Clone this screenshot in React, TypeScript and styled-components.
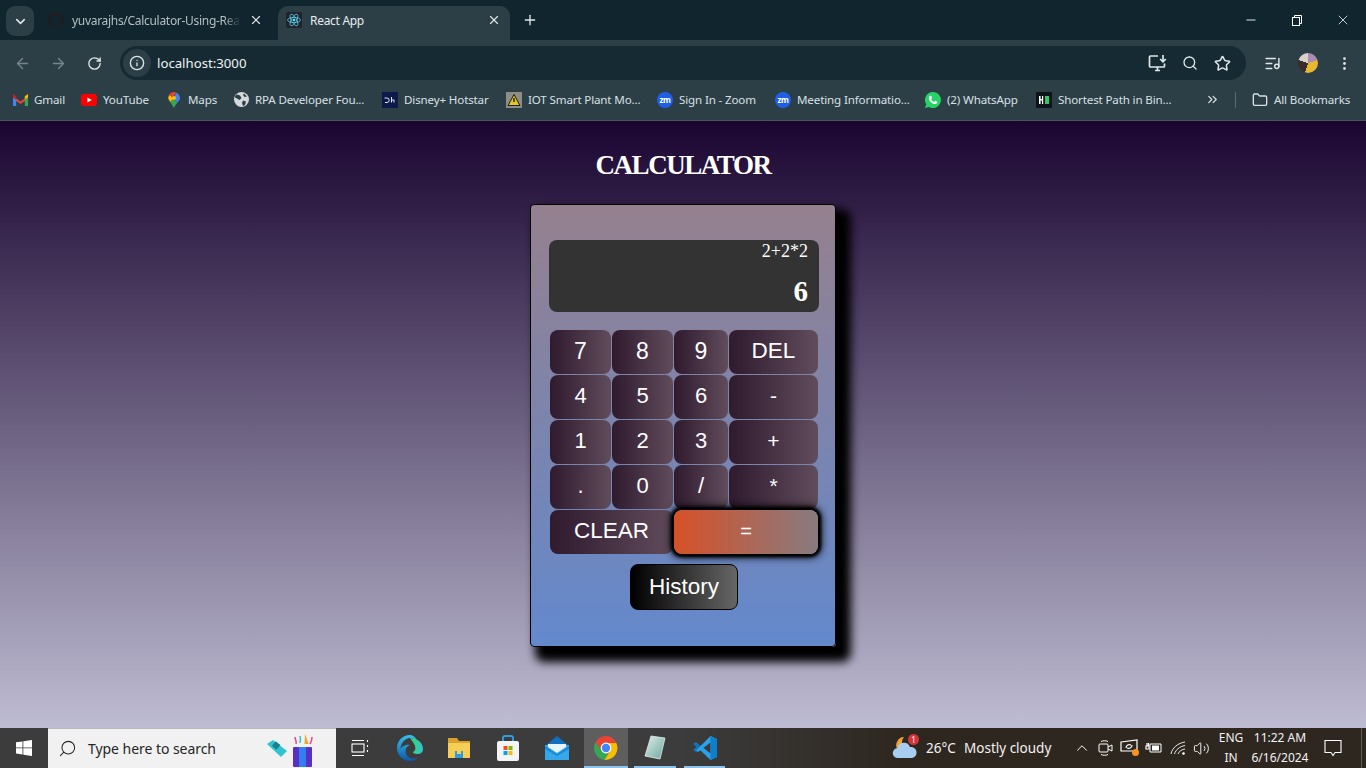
import React, {FC, ReactNode} from 'react'
import styled, {createGlobalStyle} from 'styled-components'
import {
    ArrowLeft, ArrowRight, ChevronDown, ChevronUp, ChevronsRight, EllipsisVertical, Folder, Info,
    ListMusic, Minus, Plus, RotateCw, Search, Star, Volume2, X,
} from 'lucide-react'

const GlobalStyle = createGlobalStyle`
  html, body {
    margin: 0;
    padding: 0;
    height: 100%;
    overflow: hidden;
  }
  * {
    box-sizing: border-box;
  }
`

const Root = styled.div`
  width: 1366px;
  height: 768px;
  display: flex;
  flex-direction: column;
  font-family: "Noto Sans", "Liberation Sans", sans-serif;
`

/* browser chrome */
const TabStrip = styled.div`
  height: 40px;
  flex: none;
  background: #10252d;
  display: flex;
  align-items: flex-end;
  padding-left: 6px;
  color: #dfe6e8;
`
const TabSearch = styled.div`
  width: 28px;
  height: 30px;
  margin-bottom: 4px;
  background: #2c3f47;
  border-radius: 9px;
  display: flex;
  align-items: center;
  justify-content: center;
`
const Tab = styled.div<{$active?: boolean; $w: number; $ml: number}>`
  width: ${({$w}) => $w}px;
  margin-left: ${({$ml}) => $ml}px;
  height: 34px;
  padding: 0 9px 6px 8px;
  display: flex;
  align-items: center;
  gap: 8px;
  border-radius: 10px 10px 0 0;
  background: ${({$active}) => ($active ? '#2c3f47' : 'transparent')};
  font-size: 12px;
`
const TabTitle = styled.span<{$muted?: boolean}>`
  flex: 1;
  white-space: nowrap;
  letter-spacing: -0.3px;
  color: ${({$muted}) => ($muted ? '#b4bfc3' : '#e8edef')};
  ${({$muted}) => $muted && `
    mask-image: linear-gradient(90deg, #000 90%, transparent 100%);
  `}
`
const NewTab = styled.div`
  width: 20px;
  height: 34px;
  margin-left: 10px;
  padding-bottom: 6px;
  display: flex;
  align-items: center;
  justify-content: center;
`
const WindowButtons = styled.div`
  margin-left: auto;
  height: 40px;
  display: flex;
`
const WindowButton = styled.div`
  width: 46px;
  display: flex;
  align-items: center;
  justify-content: center;
`

const Toolbar = styled.div`
  height: 40px;
  flex: none;
  background: #2c3f47;
  display: flex;
  align-items: flex-start;
  padding-top: 6px;
  color: #dfe6e8;
`
const NavButton = styled.div<{$dim?: boolean}>`
  width: 36px;
  height: 34px;
  display: flex;
  align-items: center;
  justify-content: center;
  color: ${({$dim}) => ($dim ? '#75858b' : '#dfe6e8')};
`
const NavGroup = styled.div`
  width: 120px;
  padding-left: 4px;
  display: flex;
`
const AddressBar = styled.div`
  width: 1126px;
  height: 34px;
  border-radius: 17px;
  background: #152a32;
  display: flex;
  align-items: center;
  padding-left: 3px;
`
const SiteInfo = styled.div`
  width: 28px;
  height: 28px;
  border-radius: 50%;
  background: #2c3f47;
  display: flex;
  align-items: center;
  justify-content: center;
`
const Url = styled.span`
  margin-left: 6px;
  font-size: 13.2px;
  color: #f0f3f4;
`
const AddressActions = styled.div`
  margin-left: auto;
  padding-right: 8px;
  display: flex;
  gap: 0;
`
const AddressAction = styled.div`
  width: 32px;
  height: 34px;
  display: flex;
  align-items: center;
  justify-content: center;
`
const ToolbarEnd = styled.div`
  flex: 1;
  display: flex;
  align-items: center;
  height: 34px;
  padding-left: 9px;
`
const ToolbarAction = styled.div<{$w: number}>`
  width: ${({$w}) => $w}px;
  display: flex;
  justify-content: center;
`
const Avatar = styled.div`
  width: 20px;
  height: 20px;
  border-radius: 50%;
  background: conic-gradient(#a98bb5 0 20%, #e9b82e 20% 55%, #3a2c2c 55% 80%, #d8d2c8 80%);
`

const BookmarkBar = styled.div`
  height: 41px;
  flex: none;
  background: #2c3f47;
  border-bottom: 1px solid #46565c;
  display: flex;
  align-items: center;
  padding: 0 0 1px 12px;
  color: #d8e0e3;
  font-size: 11.6px;
`
const Bookmark = styled.div<{$w: number}>`
  width: ${({$w}) => $w}px;
  display: flex;
  align-items: center;
  gap: 6px;
  white-space: nowrap;
  letter-spacing: -0.15px;
`
const FavSlot = styled.span`
  width: 16px;
  height: 16px;
  flex: none;
  display: flex;
  align-items: center;
  justify-content: center;
`
const ZoomBadge = styled.span`
  width: 16px;
  height: 16px;
  border-radius: 50%;
  background: #1f5fe8;
  color: #fff;
  font-size: 8px;
  font-weight: 700;
  line-height: 16px;
  text-align: center;
  letter-spacing: -0.3px;
`
const BookmarkEnd = styled.div`
  display: flex;
  align-items: center;
  margin-left: 35px;
`
const Separator = styled.div`
  width: 1px;
  height: 16px;
  margin: 0 16px 0 15px;
  background: #5a6a70;
`

/* the calculator page */
const Page = styled.main`
  flex: 1;
  display: flex;
  flex-direction: column;
  align-items: center;
  background: linear-gradient(180deg, #1a0530 0%, #bebcd2 100%);
`
const Title = styled.h1`
  margin: 28px 0 0;
  height: 55px;
  line-height: 33px;
  font-family: "Liberation Serif", serif;
  font-size: 27px;
  font-weight: 700;
  letter-spacing: -1.45px;
  color: #fff;
`
const Panel = styled.div`
  width: 306px;
  height: 443px;
  padding: 35px 16px 0 18px;
  border: 1px solid #000;
  border-radius: 4px;
  background: linear-gradient(180deg, #95808e 0%, #6389cd 100%);
  box-shadow: 10px 10px 10px 5px #000;
  display: flex;
  flex-direction: column;
`
const Display = styled.div`
  width: 270px;
  height: 72px;
  padding: 0 11px 0 0;
  border-radius: 8px;
  background: #333;
  color: #fff;
  font-family: "Liberation Serif", serif;
  text-align: right;
  display: flex;
  flex-direction: column;
  justify-content: space-between;
`
const Expression = styled.div`
  font-size: 18px;
  line-height: 22px;
`
const Result = styled.div`
  font-size: 29px;
  font-weight: 700;
  line-height: 42px;
`
const Keys = styled.div`
  margin: 18px 0 0 1px;
  width: 268px;
  display: grid;
  grid-template-columns: 61px 61px 54px 89px;
  grid-auto-rows: 44px;
  gap: 1px;
`
const Key = styled.button<{$span?: number; $size?: number}>`
  grid-column: span ${({$span}) => $span ?? 1};
  padding: 0 0 2px;
  border: none;
  border-radius: 8px;
  background: linear-gradient(90deg, #2f1a2e 0%, #604c5b 100%);
  color: #fff;
  font-family: "Liberation Sans", Arial, sans-serif;
  font-size: ${({$size}) => $size ?? 22}px;
`
const EqualsKey = styled(Key)`
  position: relative;
  z-index: 1;
  background: linear-gradient(90deg, #d75127 0%, #877b80 100%);
  box-shadow: 0 0 3px 3px #000, 0 0 8px 3px #000;
  font-size: 20px;
`
const HistoryRow = styled.div`
  margin-top: 10px;
  display: flex;
  justify-content: center;
  width: 270px;
`
const HistoryButton = styled.button`
  width: 108px;
  height: 46px;
  padding: 0;
  border: 1px solid #000;
  border-radius: 8px;
  background: linear-gradient(90deg, #000 0%, #666 100%);
  color: #fff;
  font-family: "Liberation Sans", Arial, sans-serif;
  font-size: 22.5px;
`

/* windows taskbar */
const Taskbar = styled.footer`
  height: 40px;
  flex: none;
  display: flex;
  align-items: stretch;
  background: linear-gradient(90deg, #3c3c3c 0%, #3c3c3c 50%, #2e2720 66%, #2e2720 100%);
  color: #fff;
`
const TaskCell = styled.div<{$w: number; $active?: boolean; $open?: boolean}>`
  width: ${({$w}) => $w}px;
  position: relative;
  display: flex;
  align-items: center;
  justify-content: center;
  background: ${({$active}) => ($active ? '#5e5e5e' : 'transparent')};
  ${({$open}) => $open && `
    &::after {
      content: "";
      position: absolute;
      left: 0;
      right: 0;
      bottom: 0;
      height: 2px;
      background: #8cc4ee;
    }
  `}
`
const SearchBox = styled.div`
  width: 288px;
  display: flex;
  align-items: center;
  padding: 0 22px 0 10px;
  background: #f1f1f1;
  border: 1px solid #b9b9b9;
  border-width: 1px 0 0 0;
  color: #262626;
  font-size: 14px;
  gap: 11px;
`
const SearchLabel = styled.span`
  flex: 1;
  letter-spacing: -0.05px;
`
const Tray = styled.div`
  margin-left: auto;
  display: flex;
  align-items: center;
  font-size: 13.5px;
`
const Weather = styled.div`
  width: 178px;
  display: flex;
  align-items: center;
  gap: 8px;
  color: #f2f2f2;
`
const WeatherIcon = styled.div`
  width: 26px;
  height: 26px;
  position: relative;
`
const WeatherBadge = styled.span`
  position: absolute;
  top: -1px;
  right: -1px;
  width: 11px;
  height: 11px;
  border-radius: 50%;
  background: #d1343b;
  font-size: 8px;
  line-height: 11px;
  text-align: center;
`
const WeatherTemp = styled.span`
  width: 30px;
  white-space: nowrap;
`
const TrayIcon = styled.div<{$w: number}>`
  width: ${({$w}) => $w}px;
  display: flex;
  justify-content: center;
`
const TrayText = styled.div<{$w: number}>`
  width: ${({$w}) => $w}px;
  text-align: center;
  font-size: 12px;
  line-height: 20px;
  color: #f2f2f2;
  white-space: nowrap;
`
const Notify = styled.div`
  width: 46px;
  display: flex;
  justify-content: center;
`
const ShowDesktop = styled.div`
  width: 5px;
  height: 40px;
  margin-left: 5px;
  border-left: 1px solid #5f5a55;
`

const GithubIcon: FC = () => (
    <svg width="16" height="16" viewBox="0 0 16 16">
        <path fill="#1d1f24" d="M8 0C3.6 0 0 3.6 0 8c0 3.5 2.3 6.5 5.5 7.6.4.1.5-.2.5-.4v-1.4c-2.2.5-2.7-1-2.7-1-.4-.9-.9-1.2-.9-1.2-.7-.5.1-.5.1-.5.8.1 1.2.8 1.2.8.7 1.2 1.9.9 2.3.7.1-.5.3-.9.5-1.1-1.8-.2-3.6-.9-3.6-4 0-.9.3-1.6.8-2.1-.1-.2-.4-1 .1-2.1 0 0 .7-.2 2.2.8.6-.2 1.3-.3 2-.3s1.4.1 2 .3c1.5-1 2.2-.8 2.2-.8.4 1.1.2 1.9.1 2.1.5.6.8 1.3.8 2.1 0 3.1-1.9 3.7-3.7 3.9.3.3.6.8.6 1.5v2.2c0 .2.1.5.6.4C13.7 14.5 16 11.5 16 8c0-4.4-3.6-8-8-8z"/>
    </svg>
)

const ReactIcon: FC = () => (
    <svg width="16" height="16" viewBox="0 0 16 16">
        <rect width="16" height="16" rx="2" fill="#20232a"/>
        <circle cx="8" cy="8" r="1.4" fill="#61dafb"/>
        <g fill="none" stroke="#61dafb" strokeWidth="0.7">
            <ellipse cx="8" cy="8" rx="6.5" ry="2.6"/>
            <ellipse cx="8" cy="8" rx="6.5" ry="2.6" transform="rotate(60 8 8)"/>
            <ellipse cx="8" cy="8" rx="6.5" ry="2.6" transform="rotate(120 8 8)"/>
        </g>
    </svg>
)

const InstallIcon: FC = () => (
    <svg width="20" height="18" viewBox="0 0 20 18" fill="none" stroke="#dfe6e8" strokeWidth="1.700">
        <path d="M10 2H2.500a1 1 0 00-1 1v9a1 1 0 001 1h13a1 1 0 001-1V9.500M7 16.500h5M9.500 13v3.500"/>
        <path d="M15 1v6.500M12.200 5l2.800 2.800L17.800 5"/>
    </svg>
)

const GmailIcon: FC = () => (
    <svg width="15" height="12" viewBox="0 0 15 12">
        <path fill="#ea4335" d="M0 2l7.5 5.4L15 2v3L7.5 10 0 5z"/>
        <path fill="#4285f4" d="M0 3.5V12h3.2V5.5z"/>
        <path fill="#34a853" d="M15 3.5V12h-3.2V5.5z"/>
        <path fill="#fbbc04" d="M11.8 2.3L15 0v3.4l-3.2 2.2z"/>
        <path fill="#c5221f" d="M0 0v3.4l3.2 2.2V2.3z"/>
    </svg>
)

const YoutubeIcon: FC = () => (
    <svg width="16" height="12" viewBox="0 0 16 12">
        <rect width="16" height="12" rx="3" fill="#f00"/>
        <path fill="#fff" d="M6.4 3.4L10.8 6 6.4 8.6z"/>
    </svg>
)

const MapsIcon: FC = () => (
    <svg width="12" height="16" viewBox="0 0 12 16">
        <path fill="#34a853" d="M2.2 10L6 16c.6-2.2 2-3.4 3.4-5.4L5 7z"/>
        <path fill="#fbbc04" d="M1 3L.2 6c.3 1.5 1 2.7 2 4L6 6z"/>
        <path fill="#ea4335" d="M1 3C2 1 4 0 6 0c1 0 2 .3 2.6.8L5 5z"/>
        <path fill="#4285f4" d="M8.6.8C10.6 2 12 4 12 6c0 1.800-1.300 3.200-2.600 4.600L5 6.500z"/>
        <circle cx="6" cy="6" r="2" fill="#fbbc04"/>
    </svg>
)

const GlobeIcon: FC = () => (
    <svg width="15" height="15" viewBox="0 0 15 15">
        <circle cx="7.5" cy="7.500" r="7.500" fill="#d3d9dc"/>
        <path fill="#2c3f47" d="M3 2.500l3 1 1.500 2.500-2 2-2.500-1.500-2-1C.8 4 1.800 3 3 2.500zM9 8.500l3 1-1 3.500-2 1-1-3zM10 1.500l3 3-2.500.5-1.500-2z"/>
    </svg>
)

const HotstarIcon: FC = () => (
    <svg width="16" height="16" viewBox="0 0 16 16">
        <rect width="16" height="16" fill="#0d1a4a"/>
        <path fill="none" stroke="#dfe6f5" strokeWidth="1" d="M2.500 6h2.500a2.200 2.200 0 010 4.500H3M9.500 5v5.500M9.500 8h2.500v2.500"/>
    </svg>
)

const PlantIcon: FC = () => (
    <svg width="16" height="16" viewBox="0 0 16 16">
        <rect width="16" height="16" fill="#8d8f87"/>
        <path fill="#e5c422" stroke="#1d1d14" strokeWidth="1" d="M8 2.500L14 13.500H2z"/>
        <path fill="#1d1d14" d="M7.300 6h1.400v4H7.300z"/>
    </svg>
)

const WhatsappIcon: FC = () => (
    <svg width="16" height="16" viewBox="0 0 16 16">
        <path fill="#25d366" d="M8 0a8 8 0 00-6.800 12.200L0 16l3.900-1.100A8 8 0 108 0z"/>
        <path fill="#fff" d="M5.200 3.800c-.5 0-1.300.8-1.300 2.100 0 2.700 3.300 6.200 6.200 6.200 1.300 0 2.200-.9 2.200-1.500 0-.5 0-.8-.2-.9l-1.800-.9c-.3 0-.6.600-1 1-.2.200-.5.100-.8-.1-1-.5-1.800-1.300-2.300-2.300-.1-.3 0-.5.200-.7.300-.3.500-.6.600-.8 0-.3-.7-2-1-2.100z"/>
    </svg>
)

const HackIcon: FC = () => (
    <svg width="16" height="16" viewBox="0 0 16 16">
        <rect width="16" height="16" fill="#10141a"/>
        <path fill="#fff" d="M3 4h1.600v3h1.400V4h1.200v8H6V8.500H4.600V12H3z"/>
        <rect x="9" y="4" width="4" height="8" fill="#2ec866"/>
    </svg>
)

const WindowsLogo: FC = () => (
    <svg width="16" height="16" viewBox="0 0 16 16">
        <path fill="#fff" d="M0 2.300L6.500 1.400V7.500H0zM7.300 1.300L16 0V7.500H7.300zM0 8.300H6.500V14.500L0 13.600zM7.300 8.300H16V16L7.300 14.700z"/>
    </svg>
)

const GiftDoodle: FC = () => (
    <svg width="48" height="36" viewBox="0 0 48 36">
        <path fill="#2fc4cf" d="M1 13l6-4 14 11-6 6z"/>
        <rect x="8" y="11" width="6" height="6" fill="#1b7f8c" transform="rotate(40 10 13)"/>
        <rect x="27" y="16" width="19" height="20" rx="1" fill="#5a2fc4"/>
        <rect x="33" y="16" width="7" height="20" fill="#2f7ff0"/>
        <path fill="none" stroke="#ef3f8f" strokeWidth="1.500" d="M30 13c1-3-1-4-1-7M44 13c1-2 2-3 2-7"/>
        <path fill="none" stroke="#2fc4cf" strokeWidth="1.500" d="M34 12c0-2 1-3 0-7"/>
        <path fill="#e8a92e" d="M39 3l2 5 1.500 5h-4z"/>
    </svg>
)

const TaskViewIcon: FC = () => (
    <svg width="18" height="18" viewBox="0 0 18 18" fill="none" stroke="#fff" strokeWidth="1.100">
        <path d="M1 1.500h12M1 16.500h12"/>
        <rect x="1" y="5" width="12" height="8"/>
        <path d="M16.500 1v2M16.500 6v2M16.500 11v2"/>
    </svg>
)

const EdgeIcon: FC = () => (
    <svg width="26" height="26" viewBox="0 0 26 26">
        <defs>
            <linearGradient id="edgeA" x1="0" y1="0" x2="0" y2="1">
                <stop offset="0" stopColor="#35c1f1"/>
                <stop offset="1" stopColor="#0c59a4"/>
            </linearGradient>
            <linearGradient id="edgeB" x1="0" y1="0" x2="1" y2="0">
                <stop offset="0" stopColor="#3bd56c"/>
                <stop offset="1" stopColor="#2fc4cf"/>
            </linearGradient>
        </defs>
        <path fill="url(#edgeA)" d="M13 0C5.800 0 0 5.800 0 13c0 7.200 5.800 13 13 13 3 0 6-1 8-3-6 2-12.500-1-12.500-7 0-3 2-5 4.500-6-4-1-8 1-9.500 4C4 8 8 3 13 3c4 0 6 2 7 4-1-5-4-7-7-7z"/>
        <path fill="url(#edgeB)" d="M13 3c5 0 13 3 13 11 0 4-3 5-6 5-2.500 0-4-1-4-2 2-1 3-3 2-6-1-3-3-5-5-8z"/>
    </svg>
)

const ExplorerIcon: FC = () => (
    <svg width="24" height="22" viewBox="0 0 24 22">
        <path fill="#d9a22e" d="M1 1h9l2 3h11v17H1z"/>
        <rect x="1" y="6" width="22" height="15" fill="#f6ce56"/>
        <rect x="8" y="14" width="8" height="7" fill="#2f9ce0"/>
        <rect x="10" y="14" width="4" height="3" fill="#f6ce56"/>
    </svg>
)

const StoreIcon: FC = () => (
    <svg width="24" height="26" viewBox="0 0 24 26">
        <path fill="none" stroke="#2f9ce0" strokeWidth="2" d="M7 7V3a2 2 0 012-2h6a2 2 0 012 2v4"/>
        <rect x="1" y="6" width="22" height="20" rx="2" fill="#f4f4f4"/>
        <rect x="7.500" y="11" width="4" height="4" fill="#f25022"/>
        <rect x="12.500" y="11" width="4" height="4" fill="#7fba00"/>
        <rect x="7.500" y="16" width="4" height="4" fill="#00a4ef"/>
        <rect x="12.500" y="16" width="4" height="4" fill="#ffb900"/>
    </svg>
)

const MailIcon: FC = () => (
    <svg width="24" height="24" viewBox="0 0 24 24">
        <path fill="#0f6fc0" d="M12 0l12 10v1H0v-1z"/>
        <rect y="9" width="24" height="15" fill="#34a8ea"/>
        <path fill="#e8f4fc" d="M3 8h18v3l-9 6-9-6z"/>
        <path fill="#1a8ad8" d="M0 10l12 8 12-8v3l-12 7L0 13z"/>
    </svg>
)

const ChromeIcon: FC = () => (
    <svg width="24" height="24" viewBox="0 0 24 24">
        <path fill="#ea4335" d="M12 0a12 12 0 00-10.400 6L6 13.500 12 7h10.400A12 12 0 0012 0z"/>
        <path fill="#34a853" d="M1.600 6A12 12 0 0010.400 23.900L15 16H8z"/>
        <path fill="#fbbc04" d="M22.400 7H12l4 8-5.600 8.900A12 12 0 0022.400 7z"/>
        <circle cx="12" cy="12" r="5.400" fill="#fff"/>
        <circle cx="12" cy="12" r="4.200" fill="#4285f4"/>
    </svg>
)

const NotesIcon: FC = () => (
    <svg width="24" height="26" viewBox="0 0 24 26">
        <defs>
            <linearGradient id="noteA" x1="0" y1="0" x2="1" y2="1">
                <stop offset="0" stopColor="#d8efe8"/>
                <stop offset="1" stopColor="#6fa7a0"/>
            </linearGradient>
        </defs>
        <path fill="url(#noteA)" stroke="#e8e8e8" strokeWidth="0.800" d="M8 1l14 2-5 21-15-3z"/>
    </svg>
)

const VscodeIcon: FC = () => (
    <svg width="26" height="26" viewBox="0 0 26 26">
        <path fill="#0e75b8" d="M1 9l3-2 6 5-6 5-3-2 3.500-3z"/>
        <path fill="#2aa2ea" d="M18.500 1L25 4v18l-6.500 3L8 15l2.500-3 8 6.500v-11L6 17l-2-1.500z"/>
        <path fill="#0e7fcc" d="M18.500 1L25 4v18l-6.500 3z"/>
    </svg>
)

const CloudIcon: FC = () => (
    <svg width="26" height="26" viewBox="0 0 26 26">
        <path fill="#f0a23a" d="M12 2a8 8 0 00-6 13h10a8 8 0 01-4-13z"/>
        <path fill="#a9cdf0" d="M6 23a5 5 0 01-.5-10 6.500 6.500 0 0112.500-1 5.500 5.500 0 012 11z"/>
    </svg>
)

const TrayCameraIcon: FC = () => (
    <svg width="18" height="18" viewBox="0 0 18 18" fill="none" stroke="#fff" strokeWidth="1">
        <rect x="2" y="5" width="9" height="8" rx="1"/>
        <path d="M11 8l4-2v6l-4-2M4 2.500c2-1 5-1 7 0M4 15.500c2 1 5 1 7 0"/>
    </svg>
)

const TrayScreenIcon: FC = () => (
    <svg width="20" height="18" viewBox="0 0 20 18">
        <path fill="none" stroke="#fff" strokeWidth="1.200" d="M1 3l16-2v11H1z"/>
        <path fill="none" stroke="#fff" strokeWidth="1.200" d="M6 9c0-3 3-4 5-3M12 6c0 3-3 4-5 3"/>
        <circle cx="15.500" cy="13.500" r="3.500" fill="#f7931e"/>
    </svg>
)

const TrayBatteryIcon: FC = () => (
    <svg width="18" height="14" viewBox="0 0 18 14">
        <path fill="none" stroke="#fff" d="M5 3h11v8H5z"/>
        <rect x="7" y="4.500" width="7" height="5" fill="#fff"/>
        <path stroke="#fff" strokeWidth="1.200" fill="none" d="M1 5h3v3H1zM2 2v3M3.500 2v3"/>
    </svg>
)

const TrayWifiIcon: FC = () => (
    <svg width="16" height="14" viewBox="0 0 16 14" fill="none" stroke="#fff" strokeWidth="0.900">
        <path d="M1 13C2 7 8 2 15 1M4.500 13c1-4 5-7.500 10.500-8.500M8 13c.7-2.300 3.500-4.500 7-5"/>
        <circle cx="13.500" cy="12.500" r="1.300" fill="#fff" stroke="none"/>
    </svg>
)

const MessageIcon: FC = () => (
    <svg width="18" height="18" viewBox="0 0 18 18">
        <path fill="none" stroke="#fff" strokeWidth="1.100" d="M1 1.500h16v12h-6l-2 3-2-3H1z"/>
    </svg>
)

type BookmarkItem = { label: string; width: number; icon: ReactNode }

const bookmarks: BookmarkItem[] = [
    {label: 'Gmail', width: 69, icon: <GmailIcon/>},
    {label: 'YouTube', width: 85, icon: <YoutubeIcon/>},
    {label: 'Maps', width: 67, icon: <MapsIcon/>},
    {label: 'RPA Developer Fou...', width: 149, icon: <GlobeIcon/>},
    {label: 'Disney+ Hotstar', width: 124, icon: <HotstarIcon/>},
    {label: 'IOT Smart Plant Mo...', width: 151, icon: <PlantIcon/>},
    {label: 'Sign In - Zoom', width: 118, icon: <ZoomBadge>zm</ZoomBadge>},
    {label: 'Meeting Informatio...', width: 150, icon: <ZoomBadge>zm</ZoomBadge>},
    {label: '(2) WhatsApp', width: 111, icon: <WhatsappIcon/>},
    {label: 'Shortest Path in Bin...', width: 134, icon: <HackIcon/>},
]

const keyRows: { label: string; span?: number; size?: number }[] = [
    {label: '7', size: 23}, {label: '8', size: 23}, {label: '9', size: 23}, {label: 'DEL', size: 22.5},
    {label: '4'}, {label: '5'}, {label: '6'}, {label: '-', size: 21},
    {label: '1'}, {label: '2'}, {label: '3'}, {label: '+', size: 21},
    {label: '.'}, {label: '0'}, {label: '/'}, {label: '*', size: 21},
    {label: 'CLEAR', span: 2, size: 22.5},
]

const App: FC = () => {
    return (
        <Root>
            <GlobalStyle/>

            <TabStrip>
                <TabSearch><ChevronDown size={15} strokeWidth={2.5}/></TabSearch>
                <Tab $w={232} $ml={6}>
                    <GithubIcon/>
                    <TabTitle $muted>yuvarajhs/Calculator-Using-Rea</TabTitle>
                    <X size={14}/>
                </Tab>
                <Tab $active $w={232} $ml={6}>
                    <ReactIcon/>
                    <TabTitle>React App</TabTitle>
                    <X size={14}/>
                </Tab>
                <NewTab><Plus size={16}/></NewTab>
                <WindowButtons>
                    <WindowButton><Minus size={14}/></WindowButton>
                    <WindowButton>
                        <svg width="12" height="12" viewBox="0 0 12 12" fill="none" stroke="#fff">
                            <rect x="1.500" y="3.500" width="7" height="8"/>
                            <path d="M3.500 3.500v-2h7v8h-2"/>
                        </svg>
                    </WindowButton>
                    <WindowButton><X size={16} strokeWidth={1.3}/></WindowButton>
                </WindowButtons>
            </TabStrip>

            <Toolbar>
                <NavGroup>
                    <NavButton $dim><ArrowLeft size={17}/></NavButton>
                    <NavButton $dim><ArrowRight size={17}/></NavButton>
                    <NavButton><RotateCw size={15} strokeWidth={2.2}/></NavButton>
                </NavGroup>
                <AddressBar>
                    <SiteInfo><Info size={16}/></SiteInfo>
                    <Url>localhost:3000</Url>
                    <AddressActions>
                        <AddressAction><InstallIcon/></AddressAction>
                        <AddressAction><Search size={16}/></AddressAction>
                        <AddressAction><Star size={17} strokeWidth={2.2}/></AddressAction>
                    </AddressActions>
                </AddressBar>
                <ToolbarEnd>
                    <ToolbarAction $w={35}><ListMusic size={17}/></ToolbarAction>
                    <ToolbarAction $w={35}><Avatar/></ToolbarAction>
                    <ToolbarAction $w={39}><EllipsisVertical size={17}/></ToolbarAction>
                </ToolbarEnd>
            </Toolbar>

            <BookmarkBar>
                {bookmarks.map((item, index) => (
                    <Bookmark key={index} $w={item.width}>
                        <FavSlot>{item.icon}</FavSlot>
                        {item.label}
                    </Bookmark>
                ))}
                <BookmarkEnd>
                    <ChevronsRight size={15}/>
                    <Separator/>
                    <Bookmark $w={100}>
                        <FavSlot><Folder size={16}/></FavSlot>
                        All Bookmarks
                    </Bookmark>
                </BookmarkEnd>
            </BookmarkBar>

            <Page>
                <Title>CALCULATOR</Title>
                <Panel>
                    <Display>
                        <Expression>2+2*2</Expression>
                        <Result>6</Result>
                    </Display>
                    <Keys>
                        {keyRows.map((item, index) => (
                            <Key key={index} $span={item.span} $size={item.size}>{item.label}</Key>
                        ))}
                        <EqualsKey $span={2}>=</EqualsKey>
                    </Keys>
                    <HistoryRow>
                        <HistoryButton>History</HistoryButton>
                    </HistoryRow>
                </Panel>
            </Page>

            <Taskbar>
                <TaskCell $w={48}><WindowsLogo/></TaskCell>
                <SearchBox>
                    <Search size={19} strokeWidth={1.3} style={{transform: 'scaleX(-1)'}}/>
                    <SearchLabel>Type here to search</SearchLabel>
                    <GiftDoodle/>
                </SearchBox>
                <TaskCell $w={48}><TaskViewIcon/></TaskCell>
                <TaskCell $w={51}><EdgeIcon/></TaskCell>
                <TaskCell $w={48}><ExplorerIcon/></TaskCell>
                <TaskCell $w={50}><StoreIcon/></TaskCell>
                <TaskCell $w={48}><MailIcon/></TaskCell>
                <TaskCell $w={3}/>
                <TaskCell $w={44} $active $open><ChromeIcon/></TaskCell>
                <TaskCell $w={6}/>
                <TaskCell $w={42} $open><NotesIcon/></TaskCell>
                <TaskCell $w={8}/>
                <TaskCell $w={41} $open><VscodeIcon/></TaskCell>
                <Tray>
                    <Weather>
                        <WeatherIcon>
                            <CloudIcon/>
                            <WeatherBadge>1</WeatherBadge>
                        </WeatherIcon>
                        <WeatherTemp>26°C</WeatherTemp>
                        <span>Mostly cloudy</span>
                    </Weather>
                    <TrayIcon $w={24}><ChevronUp size={18} strokeWidth={1.3}/></TrayIcon>
                    <TrayIcon $w={24}><TrayCameraIcon/></TrayIcon>
                    <TrayIcon $w={24}><TrayScreenIcon/></TrayIcon>
                    <TrayIcon $w={24}><TrayBatteryIcon/></TrayIcon>
                    <TrayIcon $w={24}><TrayWifiIcon/></TrayIcon>
                    <TrayIcon $w={22}><Volume2 size={17} strokeWidth={1.3}/></TrayIcon>
                    <TrayText $w={38}>ENG<br/>IN</TrayText>
                    <TrayText $w={60}>11:22 AM<br/>6/16/2024</TrayText>
                    <Notify><MessageIcon/></Notify>
                    <ShowDesktop/>
                </Tray>
            </Taskbar>
        </Root>
    )
}

export default App
